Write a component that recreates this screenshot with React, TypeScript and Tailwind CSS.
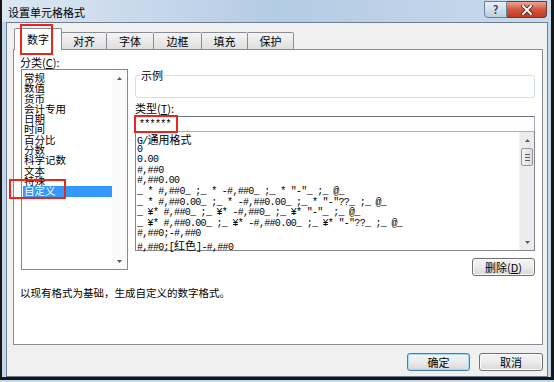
import React from "react";

const CATEGORIES = ["常规", "数值", "货币", "会计专用", "日期", "时间", "百分比", "分数", "科学记数", "文本", "特殊", "自定义"];

const FORMATS = [
  "G/通用格式",
  "0",
  "0.00",
  "#,##0",
  "#,##0.00",
  '_ * #,##0_ ;_ * -#,##0_ ;_ * "-"_ ;_ @_ ',
  '_ * #,##0.00_ ;_ * -#,##0.00_ ;_ * "-"??_ ;_ @_ ',
  '_ ¥* #,##0_ ;_ ¥* -#,##0_ ;_ ¥* "-"_ ;_ @_ ',
  '_ ¥* #,##0.00_ ;_ ¥* -#,##0.00_ ;_ ¥* "-"??_ ;_ @_ ',
  "#,##0;-#,##0",
  "#,##0;[红色]-#,##0",
];

const TABS = [
  { label: "对齐", w: "w-[45px]" },
  { label: "字体", w: "w-[47px]" },
  { label: "边框", w: "w-[48px]" },
  { label: "填充", w: "w-[46px]" },
  { label: "保护", w: "w-[46px]" },
];

function Arrow({ up }: { up?: boolean }) {
  return (
    <svg width="5" height="3" viewBox="0 0 5 3">
      <path d={up ? "M0 3L2.5 0L5 3Z" : "M0 0L2.5 3L5 0Z"} fill="#5a5a5a" />
    </svg>
  );
}

// split CJK runs so they get a full-size font inside the mono list
function FormatLine({ text }: { text: string }) {
  const parts = text.split(/([\u4e00-\u9fff]+)/);
  return (
    <div className="h-[10.6px] leading-[10.6px] whitespace-pre">
      {parts.map((p, i) =>
        i % 2 === 1 ? (
          <span key={i} className="text-[11px] tracking-normal font-['Noto_Sans_CJK_SC',sans-serif]">
            {p}
          </span>
        ) : (
          <span key={i}>{p}</span>
        )
      )}
    </div>
  );
}

function Button({ children, w, primary }: { children: React.ReactNode; w: string; primary?: boolean }) {
  return (
    <div
      className={`${w} h-[18px] rounded-[3px] border flex items-center justify-center text-[11px] leading-none text-black bg-gradient-to-b from-[#f4f4f4] via-[#ebebeb] to-[#d8d8d8] ${
        primary
          ? "border-[#3c7fb1] shadow-[inset_0_0_0_1px_#a6dbf7]"
          : "border-[#707070] shadow-[inset_0_0_0_1px_#fbfbfb]"
      }`}
    >
      {children}
    </div>
  );
}

export default function App() {
  return (
    <div className="w-[554px] h-[382px] bg-[#c4d8ec] overflow-hidden font-['Noto_Sans_CJK_SC',sans-serif] text-black">
      {/* window frame */}
      <div className="h-[380px] flex flex-col border-l-2 border-r-[3px] border-b-[3px] border-[#161616] bg-[#c3d6ea] pl-[4px] pr-[3px]">
        {/* title bar */}
        <div className="-ml-[4px] -mr-[3px] h-[22px] flex justify-between bg-gradient-to-r from-[#dde7f2] via-[#b4cbe4] to-[#c9daec]">
          <div className="pl-[6px] pt-px text-[11px] leading-[22px]">设置单元格格式</div>
          <div className="flex mr-[4px] mt-px h-[17px]">
            <div className="w-[23px] h-full rounded-bl-[4px] border border-[#6e7f96] bg-gradient-to-b from-[#e8eff7] to-[#bccee2] flex items-center justify-center">
              <span className="text-[11px] font-bold leading-none text-[#34435a] [text-shadow:0_0_2px_#fff]">?</span>
            </div>
            <div className="w-[40px] h-full rounded-br-[4px] border border-l-0 border-[#6b3a33] bg-gradient-to-b from-[#e9a596] via-[#d3553d] to-[#c23a22] flex items-center justify-center">
              <svg width="12" height="10" viewBox="0 0 12 10">
                <path d="M2 1L10 9M10 1L2 9" stroke="#4a1c14" strokeWidth="3.6" strokeLinecap="square" />
                <path d="M2 1L10 9M10 1L2 9" stroke="#fff" strokeWidth="2" strokeLinecap="square" />
              </svg>
            </div>
          </div>
        </div>

        {/* dialog body */}
        <div className="flex-1 flex flex-col border border-[#6f7e90] bg-[#f0f0f0]">
          {/* tabs */}
          <div className="relative z-10 h-[27px] pl-[7px] flex items-end">
            <div className="relative w-[48px] h-[22px] bg-white border border-b-0 border-[#898c95] rounded-t-[2px] flex justify-center pt-[3px] text-[11px] leading-[14px]">
              数字
              <div className="absolute left-[5px] -top-[5px] w-[33px] h-[31px] border-2 border-[#e5271e]" />
            </div>
            {TABS.map((t) => (
              <div
                key={t.label}
                className={`${t.w} h-[18px] border border-l-0 border-[#898c95] rounded-tr-[2px] bg-gradient-to-b from-[#f4f4f4] to-[#dfdfdf] flex items-center justify-center text-[11px] leading-none`}
              >
                {t.label}
              </div>
            ))}
          </div>

          {/* tab panel */}
          <div className="-mt-px ml-[6px] w-[530px] h-[296px] border border-[#898c95] bg-white flex flex-col pl-[6px] pr-[7px] pt-[5px]">
            <div className="flex">
              {/* category column */}
              <div className="w-[108px] flex flex-col">
                <div className="h-[14px] text-[11px] leading-[14px]">
                  分类(<span className="underline">C</span>):
                </div>
                <div className="ml-px w-[107px] h-[201px] border border-[#828790] flex">
                  <div className="flex-1 pt-[3px] pl-px text-[10.5px]">
                    {CATEGORIES.map((c) =>
                      c === "自定义" ? (
                        <div key={c} className="relative h-[10.3px] leading-[10.3px] bg-[#3399ff] text-white pl-px">
                          {c}
                          <div className="absolute -left-[14px] -top-[7px] w-[57px] h-[20px] border-2 border-[#e5271e]" />
                        </div>
                      ) : (
                        <div key={c} className="h-[10.3px] leading-[10.3px] pl-px">
                          {c}
                        </div>
                      )
                    )}
                  </div>
                  <div className="w-[15px] flex flex-col justify-between bg-[#fafafa]">
                    <div className="h-[16px] flex items-center justify-center">
                      <Arrow up />
                    </div>
                    <div className="h-[16px] flex items-center justify-center">
                      <Arrow />
                    </div>
                  </div>
                </div>
              </div>

              {/* type column */}
              <div className="ml-[7px] w-[400px] flex flex-col">
                <div className="relative mt-[20px] h-[23px] border border-[#d5dfe5] rounded-[3px]">
                  <span className="absolute left-[4px] -top-[8px] bg-white px-px text-[11px] leading-[14px]">示例</span>
                </div>
                <div className="mt-[3px] h-[14px] text-[11px] leading-[14px]">
                  类型(<span className="underline">T</span>):
                </div>
                <div className="relative mt-px h-[16px] border border-[#abadb3] border-t-[#6f7580] pl-[3px] pt-[2px] font-['Liberation_Mono',monospace] text-[10px] leading-[12px] tracking-[-0.7px]">
                  ******
                  <div className="absolute -left-[2px] -top-[2px] w-[44px] h-[18px] border-2 border-[#e5271e]" />
                </div>
                <div className="h-[119px] border border-[#828790] border-t-0 flex">
                  <div className="flex-1 pt-[2px] pl-px font-['Liberation_Mono','Noto_Sans_CJK_SC',monospace] text-[10px] tracking-[-0.7px] text-black">
                    {FORMATS.map((f) => (
                      <FormatLine key={f} text={f} />
                    ))}
                  </div>
                  <div className="w-[15px] flex flex-col bg-[#ececec] border-l border-[#f4f4f4]">
                    <div className="h-[16px] flex items-center justify-center">
                      <Arrow up />
                    </div>
                    <div className="mx-px h-[18px] rounded-[2px] border border-[#979797] bg-gradient-to-r from-[#f4f4f4] to-[#dcdcdc] flex flex-col items-center justify-center gap-[2px]">
                      <div className="w-[5px] h-px bg-[#5c5c5c]" />
                      <div className="w-[5px] h-px bg-[#5c5c5c]" />
                      <div className="w-[5px] h-px bg-[#5c5c5c]" />
                    </div>
                    <div className="flex-1" />
                    <div className="h-[16px] flex items-center justify-center">
                      <Arrow />
                    </div>
                  </div>
                </div>
                <div className="mt-[7px] self-end">
                  <Button w="w-[63px]">
                    删除(<span className="underline">D</span>)
                  </Button>
                </div>
              </div>
            </div>
            <div className="mt-[10px] text-[10.5px] leading-[14px]">以现有格式为基础，生成自定义的数字格式。</div>
          </div>

          {/* dialog buttons */}
          <div className="mt-[8px] flex justify-end gap-[9px] pr-[4px]">
            <Button w="w-[63px]" primary>
              确定
            </Button>
            <Button w="w-[64px]">取消</Button>
          </div>
        </div>
      </div>
    </div>
  );
}
